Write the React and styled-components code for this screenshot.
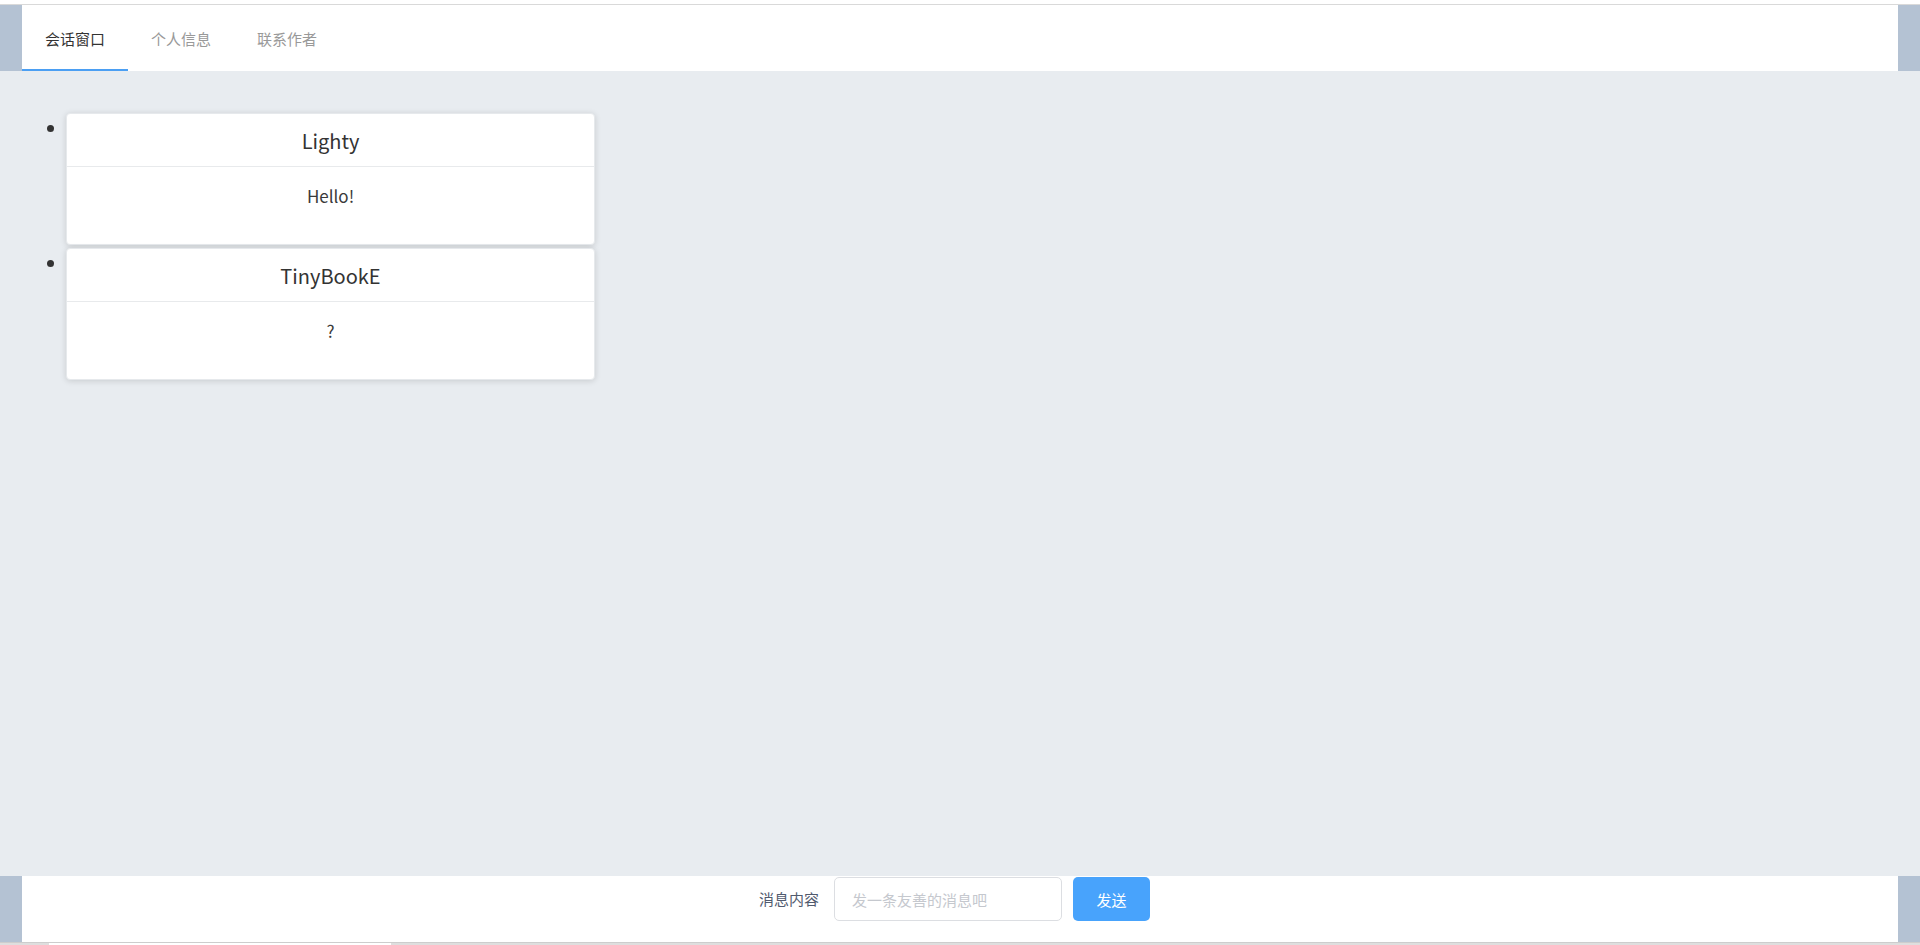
import React from "react";
import styled, { createGlobalStyle } from "styled-components";

const GlobalStyle = createGlobalStyle`
  html, body {
    margin: 0;
    padding: 0;
    height: 100%;
    overflow: hidden;
    font-family: "Noto Sans CJK SC", "Noto Sans", sans-serif;
    background: #fff;
  }
  #root { height: 100%; }
  * { box-sizing: border-box; }
`;

const Page = styled.div`
  display: flex;
  flex-direction: column;
  height: 100vh;
`;

const TopRule = styled.div`
  height: 5px;
  flex: none;
  background: #fff;
  border-bottom: 1px solid #d9d9d9;
`;

const Band = styled.div`
  display: flex;
  flex: none;
  height: 66px;
  background: #fff;
`;

const Gutter = styled.div`
  width: 22px;
  flex: none;
  background: #b4c2d3;
`;

const TabBar = styled.nav`
  flex: 1;
  display: flex;
  align-items: stretch;
`;

const Tab = styled.div`
  width: 106px;
  display: flex;
  align-items: center;
  justify-content: center;
  font-size: 15px;
  color: ${(p) => (p.$active ? "#333" : "#999")};
  border-bottom: 2px solid ${(p) => (p.$active ? "#4b9ff3" : "transparent")};
  padding-top: 2px;
  cursor: pointer;
`;

const Content = styled.main`
  flex: 1;
  background: #e8ecf0;
  padding-top: 42px;
  overflow: hidden;
`;

const List = styled.ul`
  list-style: none;
  margin: 0;
  padding: 0 0 0 47px;
  display: flex;
  flex-direction: column;
  gap: 3px;
`;

const Item = styled.li`
  display: flex;
  align-items: flex-start;
`;

const Bullet = styled.span`
  width: 7px;
  height: 7px;
  border-radius: 50%;
  background: #333;
  margin: 12px 12px 0 0;
  flex: none;
`;

const Card = styled.div`
  width: 529px;
  background: #fff;
  border: 1px solid #e6e9ec;
  border-radius: 4px;
  box-shadow: 0 1px 6px rgba(0, 0, 0, 0.14);
`;

const CardHead = styled.div`
  height: 53px;
  display: flex;
  align-items: center;
  justify-content: center;
  border-bottom: 1px solid #e8eaec;
  font-size: 20px;
  color: #333;
`;

const CardBody = styled.div`
  height: 77px;
  padding-top: 15px;
  text-align: center;
  font-size: 17px;
  line-height: 28px;
  color: #3a3a3a;
`;

const FooterBody = styled.form`
  flex: 1;
  display: flex;
  justify-content: center;
  align-items: flex-start;
  padding: 1px 11px 0 0;
`;

const Label = styled.label`
  font-size: 15px;
  line-height: 44px;
  color: #515a6e;
  margin-right: 15px;
`;

const Input = styled.input`
  width: 228px;
  height: 44px;
  border: 1px solid #dcdee2;
  border-radius: 5px;
  padding: 0 17px;
  font-family: inherit;
  font-size: 15px;
  color: #515a6e;
  outline: none;
  &::placeholder { color: #c5c8ce; }
`;

const SendButton = styled.button`
  width: 77px;
  height: 44px;
  margin-left: 11px;
  border: none;
  border-radius: 5px;
  background: #48a3fc;
  color: #fff;
  font-family: inherit;
  font-size: 15px;
  cursor: pointer;
`;

const ScrollTrack = styled.div`
  flex: none;
  height: 3px;
  border-top: 1px solid #cdcdcd;
  background: #dedede;
  display: flex;
  padding-left: 49px;
`;

const Thumb = styled.div`
  width: 342px;
  background: #fff;
`;

const messages = [
  { name: "Lighty", text: "Hello!" },
  { name: "TinyBookE", text: "?" },
];

const tabs = ["会话窗口", "个人信息", "联系作者"];

export default function App() {
  return (
    <>
      <GlobalStyle />
      <Page>
        <TopRule />
        <Band>
          <Gutter />
          <TabBar>
            {tabs.map((t, i) => (
              <Tab key={t} $active={i === 0}>{t}</Tab>
            ))}
          </TabBar>
          <Gutter />
        </Band>
        <Content>
          <List>
            {messages.map((m) => (
              <Item key={m.name}>
                <Bullet />
                <Card>
                  <CardHead>{m.name}</CardHead>
                  <CardBody>{m.text}</CardBody>
                </Card>
              </Item>
            ))}
          </List>
        </Content>
        <Band>
          <Gutter />
          <FooterBody onSubmit={(e) => e.preventDefault()}>
            <Label>消息内容</Label>
            <Input placeholder="发一条友善的消息吧" />
            <SendButton type="submit">发送</SendButton>
          </FooterBody>
          <Gutter />
        </Band>
        <ScrollTrack>
          <Thumb />
        </ScrollTrack>
      </Page>
    </>
  );
}
